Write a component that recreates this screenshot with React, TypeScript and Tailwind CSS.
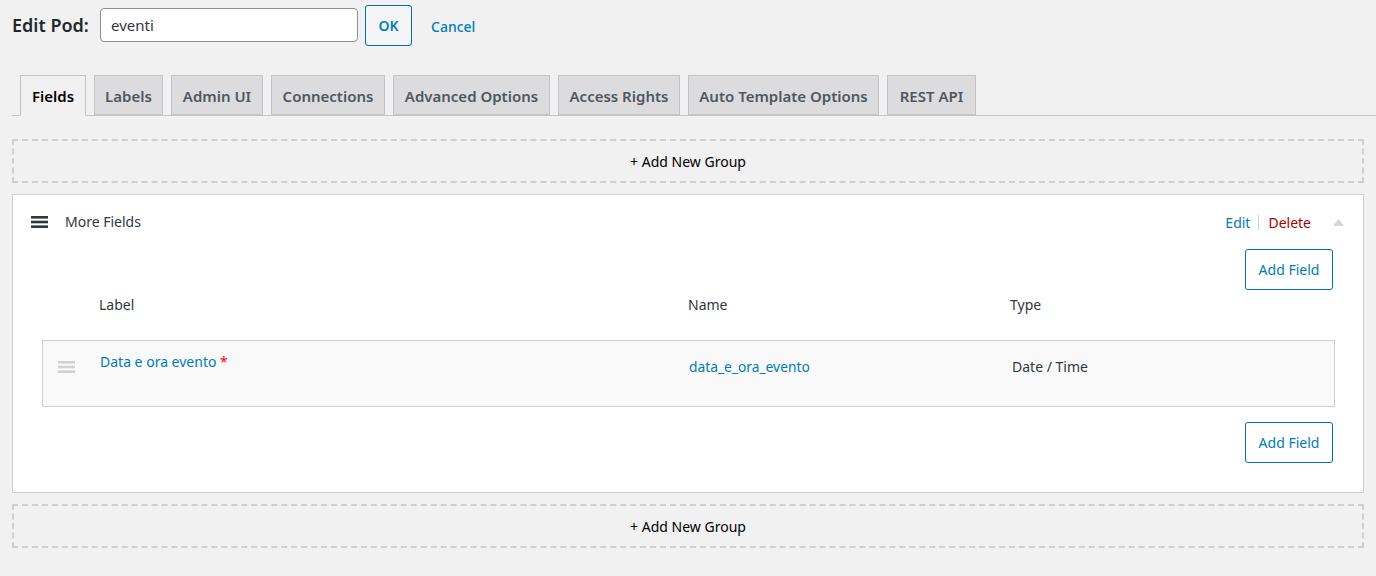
const tabs = [
  { label: 'Fields', width: 'w-[66px]' },
  { label: 'Labels', width: 'w-[69px]' },
  { label: 'Admin UI', width: 'w-[92px]' },
  { label: 'Connections', width: 'w-[114px]' },
  { label: 'Advanced Options', width: 'w-[157px]' },
  { label: 'Access Rights', width: 'w-[122px]' },
  { label: 'Auto Template Options', width: 'w-[191px]' },
  { label: 'REST API', width: 'w-[89px]' },
];

function AddGroup() {
  return (
    <div className="h-[44px] mx-3 border-2 border-dashed border-[#cfcfd3] flex items-center justify-center text-[14px] text-black">
      + Add New Group
    </div>
  );
}

function AddField() {
  return (
    <button className="w-[88px] h-[41px] border border-[#0071a1] rounded-[3px] bg-white text-[14px] text-[#007cba] flex items-center justify-center">
      Add Field
    </button>
  );
}

function Bars({ className }: { className: string }) {
  return (
    <svg width="17" height="12" viewBox="0 0 17 12" className={className}>
      <rect y="0" width="17" height="2.6" fill="currentColor" />
      <rect y="4.7" width="17" height="2.6" fill="currentColor" />
      <rect y="9.4" width="17" height="2.6" fill="currentColor" />
    </svg>
  );
}

export default function App() {
  return (
    <div className="w-[1376px] h-[576px] overflow-hidden bg-[#f1f1f1] text-[#32373c] font-['Noto_Sans',sans-serif] text-[14px]">
      {/* title row */}
      <div className="h-[51px] pt-[5px] pl-3 flex items-start">
        <span className="w-[88px] mt-[7px] text-[18px] leading-[26px] font-semibold text-[#23282d]">Edit Pod:</span>
        <div className="w-[258px] h-[34px] mt-[3px] pl-[10px] flex items-center bg-white border border-[#8c8f94] rounded-[4px] text-[15px]">
          eventi
        </div>
        <button className="ml-[7px] w-[47px] h-[41px] border border-[#0071a1] rounded-[3px] text-[14px] font-semibold text-[#007cba] bg-[#f3f5f6]">
          OK
        </button>
        <span className="ml-[19px] mt-[11px] leading-[22px] text-[14px] font-medium text-[#007cba]">Cancel</span>
      </div>

      {/* tabs */}
      <div className="mt-[24px] ml-3 pl-2 h-[41px] flex gap-2 border-b border-[#c3c4c7]">
        {tabs.map((tab, i) => (
          <div
            key={tab.label}
            className={`${tab.width} flex items-center justify-center border border-[#c3c4c7] text-[15px] font-semibold ${
              i === 0 ? 'h-[41px] pt-[1px] bg-[#f1f1f1] border-b-[#f1f1f1] text-black' : 'h-[40px] pt-[2px] bg-[#dcdcde] text-[#50575e]'
            }`}
          >
            {tab.label}
          </div>
        ))}
      </div>

      <div className="mt-[23px]">
        <AddGroup />
      </div>

      {/* group panel */}
      <div className="mt-[11px] mx-3 h-[299px] bg-white border border-[#ccd0d4] flex flex-col">
        <div className="h-[54px] flex items-center pl-[18px] pr-[19px]">
          <Bars className="text-[#32373c]" />
          <span className="ml-[17px] -mt-[2px]">More Fields</span>
          <span className="ml-auto text-[#007cba]">Edit</span>
          <span className="w-[1px] h-[15px] mt-[1px] ml-[8px] mr-[9px] bg-[#c5d5e0]" />
          <span className="text-[#a00]">Delete</span>
          <svg width="11" height="7" viewBox="0 0 11 7" className="ml-[22px] text-[#d5d7da]">
            <path d="M5.5 0 L11 7 L0 7 Z" fill="currentColor" />
          </svg>
        </div>

        <div className="flex justify-end pr-[30px]">
          <AddField />
        </div>

        <div className="mt-[4px] h-[20px] flex items-center pl-[86px]">
          <span className="w-[589px]">Label</span>
          <span className="w-[322px]">Name</span>
          <span>Type</span>
        </div>

        <div className="mt-[26px] ml-[29px] mr-[28px] h-[67px] bg-[#f9f9f9] border border-[#ccd0d4] flex pl-[15px]">
          <Bars className="text-[#cfd1d3] mt-[20px] shrink-0" />
          <span className="ml-[25px] mt-[10px] text-[#007cba] w-[589px]">
            Data e ora evento <span className="text-[#f00]">*</span>
          </span>
          <span className="mt-[16px] text-[13.8px] text-[#007cba] w-[323px]">data_e_ora_evento</span>
          <span className="mt-[15px]">Date / Time</span>
        </div>

        <div className="mt-[15px] flex justify-end pr-[30px]">
          <AddField />
        </div>
      </div>

      <div className="mt-[11px]">
        <AddGroup />
      </div>
    </div>
  );
}
